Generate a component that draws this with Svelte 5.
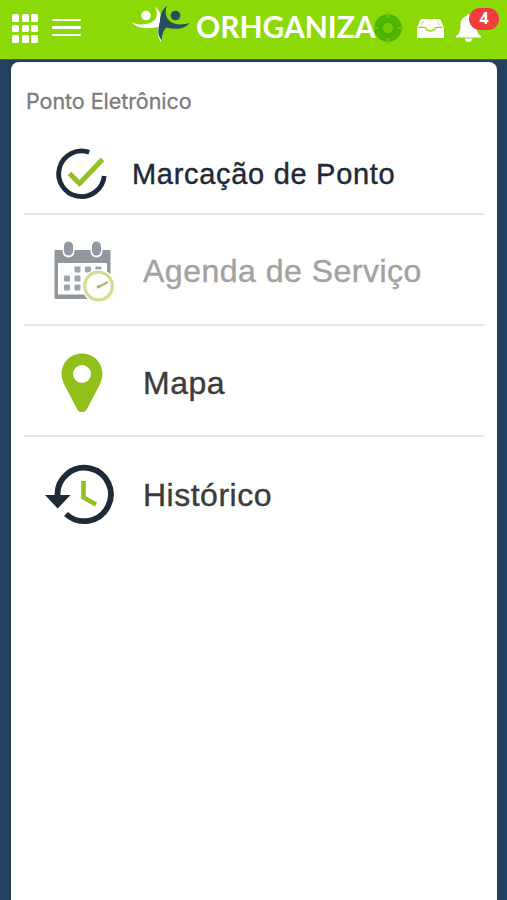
<script lang="ts">
  interface MenuItem {
    id: string;
    label: string;
    disabled?: boolean;
  }

  const notifications = 4;

  const items: MenuItem[] = [
    { id: 'punch', label: 'Marcação de Ponto' },
    { id: 'schedule', label: 'Agenda de Serviço', disabled: true },
    { id: 'map', label: 'Mapa' },
    { id: 'history', label: 'Histórico' },
  ];

  const ticks = [0, 90, 180, 270];
  const gridCells = [0, 1, 2, 3, 4, 5, 6, 7, 8];
</script>

<div class="screen">
  <header class="topbar">
    <button type="button" class="icon-btn apps" aria-label="Aplicativos">
      {#each gridCells as cell (cell)}<i></i>{/each}
    </button>
    <button type="button" class="icon-btn burger" aria-label="Menu">
      <i></i><i></i><i></i>
    </button>

    <div class="brand">
      <svg class="logo" width="60" height="40" viewBox="0 0 60 40" aria-hidden="true">
        <g fill="#fff">
          <circle cx="14" cy="13.500" r="4.800" />
          <path d="M0 20.500C7 24 17 23 22 18.500C26 15 25.500 9 22.500 4.500C27 8 29.500 12 29.500 18L29 40C26 36 25.500 30 26 25C17 27 5 27 0 20.500Z" />
        </g>
        <g fill="#274d63">
          <circle cx="43.500" cy="13.500" r="4.800" />
          <path d="M58 20.500C51 24 41 22.500 37 18.500C33 14 33 9 35 3.500C30 8 28 13 28 19C26 27 25 32 29.500 38.500C30 32 31.500 28 34.500 25.500C44 28 53 27 58 20.500Z" />
        </g>
      </svg>
      <span class="brand-name">ORHGANIZA</span>
    </div>

    <svg class="target" width="30" height="32" viewBox="-15 -16 30 32" aria-hidden="true">
      <circle r="9.3" fill="none" stroke="#4eb503" stroke-width="9" />
      <circle r="4.6" fill="#72cb04" />
      {#each ticks as angle (angle)}
        <path d="M0 -16V-10" stroke="#76cd08" stroke-width="1.6" transform="rotate({angle})" />
      {/each}
    </svg>

    <button type="button" class="icon-btn inbox" aria-label="Caixa de entrada">
      <svg width="27" height="21" viewBox="0 0 27 21">
        <path d="M5 1H22Q23.500 1 24 2.300L27 10V18.500Q27 20 25.500 20H1.500Q0 20 0 18.500V10L3 2.300Q3.500 1 5 1Z" fill="#fff" />
        <path d="M1.500 9.300H8Q9.500 13 13.500 13T19 9.300H25.500" fill="none" stroke="#85d705" stroke-width="1.300" />
        <path d="M6.500 3L4.500 7M20.500 3L22.500 7" stroke="#b9e96e" stroke-width="1" />
      </svg>
    </button>

    <button type="button" class="icon-btn bell" aria-label="Notificações">
      <svg width="25" height="28" viewBox="0 0 25 28">
        <path d="M12.500 0Q14 0 14 2C19 3 20.500 7 20.500 11C20.500 17 21.500 20 25 22V23.500H0V22C3.500 20 4.500 17 4.500 11C4.500 7 6 3 11 2Q11 0 12.500 0Z" fill="#fff" />
        <path d="M8.500 24.500H16.500Q15.500 28 12.500 28T8.500 24.500Z" fill="#fff" />
      </svg>
      <span class="badge">{notifications}</span>
    </button>
  </header>

  <main class="card">
    <h1>Ponto Eletrônico</h1>
    <ul>
      {#each items as item (item.id)}
        <li class={item.id} class:disabled={item.disabled}>
          <svg class="icon" width="72" height="64" viewBox="0 0 72 64" aria-hidden="true">
            {#if item.id === 'punch'}
              <path d="M45.200 10.300A22.800 22.800 0 1 0 60.200 34" fill="none" stroke="#1d2a38" stroke-width="4.800" />
              <path d="M25.500 31.500L35.500 41.500L58.500 17.500" fill="none" stroke="#92c01f" stroke-width="5" />
            {:else if item.id === 'schedule'}
              <rect x="10.500" y="11" width="56" height="49" rx="1" fill="#92979e" />
              <rect x="14" y="24" width="49" height="31.500" fill="#fff" />
              {#each [24.500, 52.500] as x (x)}
                <rect x={x - 6} y="1" width="12" height="17.500" rx="6" fill="#fff" />
                <rect x={x - 4.500} y="2.500" width="9" height="14" rx="4.500" fill="#9399a2" />
              {/each}
              <g fill="#9ea4ac">
                <rect x="30.500" y="27.500" width="6" height="6" rx="1" />
                <rect x="41" y="27.500" width="6" height="6" rx="1" />
                <rect x="51.500" y="27.500" width="6" height="6" rx="1" />
                <rect x="20" y="36.500" width="6" height="6" rx="1" />
                <rect x="30.500" y="36.500" width="6" height="6" rx="1" />
                <rect x="20" y="45.500" width="6" height="6" rx="1" />
                <rect x="30.500" y="45.500" width="6" height="6" rx="1" />
              </g>
              <circle cx="54.500" cy="47" r="16.800" fill="#fff" />
              <circle cx="54.500" cy="47" r="13.800" fill="#fff" stroke="#cedf8d" stroke-width="3.200" />
              <path d="M54.500 48L64 43" stroke="#a5bc75" stroke-width="2" />
              <circle cx="54.500" cy="47.800" r="1.800" fill="#a5bc75" />
            {:else if item.id === 'map'}
              <path d="M38 2.500C26.500 2.500 17.500 11.500 17.500 23C17.500 27 19 31 21 35L33 58Q34.500 61 36.500 61H39.500Q41.500 61 43 58L55 35C57 31 58.500 27 58.500 23C58.500 11.500 49.500 2.500 38 2.500Z" fill="#92c01b" />
              <circle cx="38" cy="23" r="9" fill="#fff" />
            {:else}
              <path d="M13.500 32.500A26.700 26.700 0 1 1 22 51" fill="none" stroke="#1d2a38" stroke-width="5.800" />
              <path d="M1 32H26.500L13.700 45.500Z" fill="#1d2a38" />
              <path d="M39.500 18V34.500L52 41.500" fill="none" stroke="#92c01f" stroke-width="4.600" />
            {/if}
          </svg>
          <span class="label">{item.label}</span>
        </li>
      {/each}
    </ul>
  </main>
</div>

<style>
  :global(body) {
    margin: 0;
  }

  .screen {
    display: flex;
    flex-direction: column;
    box-sizing: border-box;
    width: 507px;
    height: 900px;
    overflow: hidden;
    background: #23415e;
    font-family: 'Liberation Sans', Arial, sans-serif;
  }

  .topbar {
    display: flex;
    align-items: flex-start;
    flex: none;
    box-sizing: border-box;
    height: 60px;
    padding-left: 12px;
    border-bottom: 1px solid #267037;
    background: #8bd907;
  }

  .icon-btn {
    flex: none;
    padding: 0;
    border: 0;
    background: none;
  }

  .apps {
    display: grid;
    grid-template-columns: repeat(3, 7px);
    grid-auto-rows: 7.500px;
    gap: 3px 2.500px;
    margin-top: 14px;
  }

  .apps i {
    border-radius: 1.500px;
    background: #fff;
  }

  .burger {
    display: flex;
    flex-direction: column;
    gap: 5px;
    width: 29px;
    margin: 19px 0 0 14px;
  }

  .burger i {
    height: 2.400px;
    border-radius: 1px;
    background: #fff;
  }

  .brand {
    display: flex;
    align-items: flex-start;
    width: 244px;
    margin-left: 51px;
  }

  .logo {
    flex: none;
    margin-top: 2px;
  }

  .brand-name {
    margin: 8px 0 0 4px;
    color: #fff;
    font: 700 30px/36px Lato, sans-serif;
    letter-spacing: -0.050px;
    white-space: nowrap;
  }

  .target {
    flex: none;
    margin: 12px 0 0 -3px;
  }

  .inbox {
    margin: 18px 0 0 14px;
  }

  .bell {
    position: relative;
    margin: 14px 0 0 12px;
  }

  .icon-btn svg {
    display: block;
  }

  .badge {
    position: absolute;
    top: -6px;
    left: 13px;
    width: 30px;
    height: 22px;
    border-radius: 11px;
    background: #f13c40;
    color: #fff;
    font: 700 16px/21px 'Open Sans', sans-serif;
    text-align: center;
  }

  .card {
    flex: 1;
    margin: 2px 10px 0 11px;
    padding: 0 13px;
    border-radius: 8px 8px 0 0;
    background: #fff;
  }

  h1 {
    margin: 0;
    padding: 25px 0 0 2px;
    color: #7b7b7b;
    font: 400 21.500px/28px Inter, sans-serif;
    letter-spacing: -0.050px;
    -webkit-text-stroke: 0.300px currentColor;
  }

  ul {
    margin: 0;
    padding: 0;
    list-style: none;
  }

  li {
    display: flex;
    align-items: center;
    box-sizing: border-box;
    height: 111px;
    padding: 5px 0 0 20px;
    border-bottom: 2px solid #e6e6e6;
  }

  li:last-child {
    border-bottom: 0;
  }

  .icon {
    flex: none;
  }

  .label {
    margin-left: 27px;
    color: #3c3c3c;
    font-size: 32px;
    line-height: 40px;
    letter-spacing: 0.500px;
    white-space: nowrap;
    -webkit-text-stroke: 0.400px currentColor;
  }

  .punch {
    height: 100px;
    padding-top: 20px;
  }

  .punch .label {
    margin-left: 16px;
    color: #202936;
    font-size: 29px;
    letter-spacing: 0.700px;
  }

  .schedule {
    padding-top: 3px;
  }

  .disabled .label {
    color: #a2a2a2;
  }
</style>
